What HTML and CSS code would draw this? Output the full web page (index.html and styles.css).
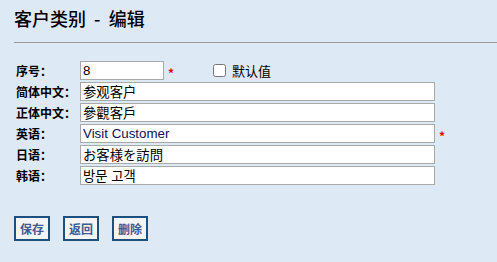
FILE: index.html
```html
<!DOCTYPE html>
<html lang="zh-CN">
<head>
  <meta charset="UTF-8">
  <meta name="viewport" content="width=device-width, initial-scale=1.0">
  <title>客户类别 - 编辑</title>
  <link rel="stylesheet" href="styles.css">
</head>
<body>
  <div class="page">
    <h1 class="title">客户类别&nbsp; -&nbsp; 编辑</h1>
    <hr class="divider">

    <div class="form">
      <div class="row">
        <label class="label" for="seq">序号：</label>
        <input class="field field-short" type="text" id="seq" value="8">
        <span class="required">*</span>
        <label class="default-check">
          <input type="checkbox" id="is-default">
          <span>默认值</span>
        </label>
      </div>
      <div class="row">
        <label class="label" for="name-sc">简体中文：</label>
        <input class="field" type="text" id="name-sc" value="参观客户">
      </div>
      <div class="row">
        <label class="label" for="name-tc">正体中文：</label>
        <input class="field" type="text" id="name-tc" value="參觀客戶">
      </div>
      <div class="row">
        <label class="label" for="name-en">英语：</label>
        <input class="field field-en" type="text" id="name-en" value="Visit Customer">
        <span class="required">*</span>
      </div>
      <div class="row">
        <label class="label" for="name-ja">日语：</label>
        <input class="field" type="text" id="name-ja" value="お客様を訪問" lang="ja">
      </div>
      <div class="row">
        <label class="label" for="name-ko">韩语：</label>
        <input class="field" type="text" id="name-ko" value="방문 고객" lang="ko">
      </div>
    </div>

    <div class="actions">
      <button class="btn" id="save-btn">保存</button>
      <button class="btn" id="back-btn">返回</button>
      <button class="btn" id="delete-btn">删除</button>
    </div>
  </div>
</body>
</html>
```

FILE: styles.css
```css
body {
  margin: 0;
  background-color: #dee9f6;
  font-family: "Noto Sans CJK SC", "Liberation Sans", sans-serif;
  color: #000;
}
.page {
  padding: 6px 0 0 14px;
}
.title {
  margin: 0;
  font-size: 18px;
  line-height: 24px;
  font-weight: 500;
  color: #000;
}
.divider {
  margin: 12px 0 0 0;
  border: none;
  border-top: 1px solid #9a9a9a;
  height: 0;
}
.form {
  margin-top: 17px;
  padding-left: 2px;
}
.row {
  display: flex;
  align-items: center;
  height: 21px;
}
.label {
  width: 64px;
  font-size: 12px;
  font-weight: bold;
  line-height: 19px;
}
.field {
  width: 355px;
  height: 19px;
  box-sizing: border-box;
  margin: 0;
  padding: 0 2px;
  border: 1px solid #a9a9a9;
  background: #fff;
  font-family: "Liberation Sans", "Noto Sans CJK SC", sans-serif;
  font-size: 13.33px;
  color: #000;
}
.field-short {
  width: 84px;
}
.field-en {
  color: #101050;
}
.required {
  margin-left: 4px;
  color: #e00000;
  font-size: 12px;
  font-weight: bold;
  line-height: 1;
  padding-top: 4px;
}
.default-check {
  display: flex;
  align-items: center;
  margin-left: 39px;
  font-size: 13px;
}
.default-check input {
  width: 13px;
  height: 13px;
  margin: 0 6px 0 0;
}
.actions {
  display: flex;
  gap: 13px;
  margin-top: 30px;
}
.btn {
  width: 36px;
  height: 25px;
  padding: 0;
  border: 2px solid #1d4f7f;
  background-color: #f4f4f4;
  color: #3e5b96;
  font-family: "Noto Sans CJK SC", sans-serif;
  font-size: 12px;
  font-weight: bold;
  cursor: pointer;
}
.btn:hover {
  background-color: #e8eef6;
}
```
